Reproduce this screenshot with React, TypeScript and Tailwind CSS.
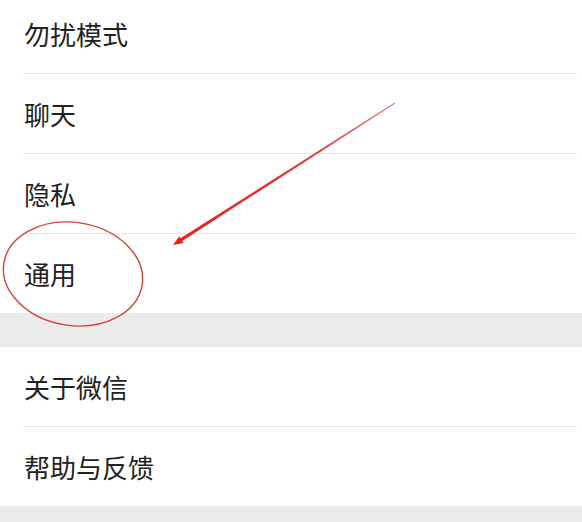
import React from "react";

const Row = ({ label, divider = true }: { label: string; divider?: boolean }) => (
  <>
    <div className="h-[79px] flex items-center pl-[24px] text-[26px] text-[#222222] bg-white">
      <span>{label}</span>
    </div>
    {divider && <div className="h-px ml-[23px] mr-[5px] bg-[#e6e6e6]" />}
  </>
);

export default function App() {
  return (
    <div
      className="relative w-[582px] h-[522px] overflow-hidden bg-white"
      style={{ fontFamily: '"Noto Sans CJK SC", "Noto Sans", sans-serif' }}
    >
      <div className="-mt-[6px] flex flex-col">
        <Row label="勿扰模式" />
        <Row label="聊天" />
        <Row label="隐私" />
        <Row label="通用" divider={false} />
        <div className="h-[34px] bg-[#ebebeb]" />
        <Row label="关于微信" />
        <Row label="帮助与反馈" divider={false} />
        <div className="h-[40px] bg-[#ebebeb]" />
      </div>
      <svg
        className="absolute inset-0 pointer-events-none"
        width="582"
        height="522"
        viewBox="0 0 582 522"
      >
        <defs>
          <linearGradient id="ag" x1="395" y1="103" x2="173" y2="245" gradientUnits="userSpaceOnUse">
            <stop offset="0" stopColor="#e07a7a" />
            <stop offset="0.35" stopColor="#e03a32" />
            <stop offset="1" stopColor="#e8201a" />
          </linearGradient>
        </defs>
        <ellipse
          cx="73"
          cy="274"
          rx="70"
          ry="51.5"
          transform="rotate(9 73 274)"
          fill="none"
          stroke="#d2413a"
          strokeWidth="1.4"
        />
        <polygon
          points="395.27,103.42 182.26,240.95 183.56,242.97 173,245 179.24,236.23 180.54,238.25 394.73,102.58"
          fill="url(#ag)"
        />
      </svg>
    </div>
  );
}
